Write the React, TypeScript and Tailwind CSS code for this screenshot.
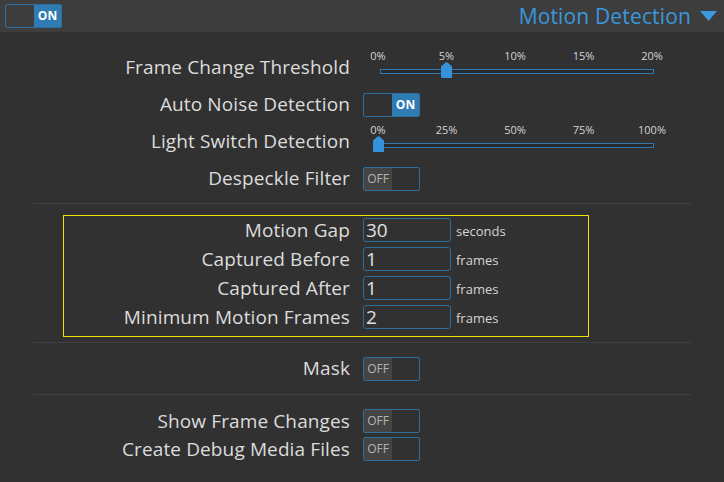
import type { ReactNode } from "react";

const ticksA = ["0%", "5%", "10%", "15%", "20%"];
const ticksB = ["0%", "25%", "50%", "75%", "100%"];

function Toggle({ on }: { on: boolean }) {
  return (
    <div className="flex h-6 w-[57px] overflow-hidden rounded-[2px] border border-[#2e6f9f]">
      {on ? (
        <>
          <div className="w-[28px]" />
          <div className="flex flex-1 items-center justify-center bg-[#2f7bb4] text-[12px] font-bold text-white">ON</div>
        </>
      ) : (
        <>
          <div className="flex w-[28px] items-center justify-center bg-[#444444] text-[12px] text-[#b4b4b4]">OFF</div>
          <div className="flex-1" />
        </>
      )}
    </div>
  );
}

function Slider({ ticks, index }: { ticks: string[]; index: number }) {
  return (
    <div className="relative h-full w-[310px]">
      {ticks.map((t, i) => (
        <span
          key={t}
          className="absolute top-[1px] -translate-x-1/2 text-[11px] leading-none text-[#d4d4d4]"
          style={{ left: 15 + i * 68.5 }}
        >
          {t}
        </span>
      ))}
      <div className="absolute left-[17px] top-[20px] h-[5px] w-[274px] border border-[#2f7ab3] bg-[#2a2a2a]" />
      <svg
        className="absolute top-[13px]"
        style={{ left: 15 + index * 68.5 - 5.5 }}
        width="11"
        height="16"
        viewBox="0 0 11 16"
      >
        <path d="M4.5 0.6 Q5.5 -0.2 6.5 0.6 L11 4.5 V15 Q11 16 10 16 H1 Q0 16 0 15 V4.5 Z" fill="#3593dc" />
      </svg>
    </div>
  );
}

function Row({ label, children }: { label: string; children: ReactNode }) {
  return (
    <div className="flex h-[37px] items-center">
      <div className="w-[350px] shrink-0 text-right text-[19px] leading-none tracking-[0.12px]">{label}</div>
      <div className="ml-[13px] flex h-full items-center">{children}</div>
    </div>
  );
}

function BoxRow({ label, value, unit }: { label: string; value: string; unit: string }) {
  return (
    <div className="flex h-6 items-center">
      <div className="w-[286px] shrink-0 text-right text-[19px] leading-none tracking-[0.12px]">{label}</div>
      <input
        readOnly
        value={value}
        className="ml-[13px] h-6 w-[88px] rounded-[3px] border border-[#2c6d9c] bg-transparent px-[2px] text-[19px] leading-none text-[#e0e0e0] outline-none"
      />
      <span className="ml-[5px] mt-[3px] text-[13px] text-[#d4d4d4]">{unit}</span>
    </div>
  );
}

function SmallRow({ label }: { label: string }) {
  return (
    <div className="flex h-6 items-center">
      <div className="w-[350px] text-right text-[19px] leading-none tracking-[0.12px]">{label}</div>
      <div className="ml-[13px]">
        <Toggle on={false} />
      </div>
    </div>
  );
}

function Divider() {
  return <div className="mx-[33px] h-px bg-[#404040]" />;
}

export default function App() {
  return (
    <div className="h-[482px] w-[724px] overflow-hidden bg-[#313131] font-['Open_Sans',sans-serif] text-[#dcdcdc]">
      <header className="flex h-8 items-center justify-between bg-[#3d3d3d] pl-[5px] pr-[7px]">
        <Toggle on />
        <div className="flex items-center gap-[9px] text-[21px] leading-none tracking-[0.15px] text-[#3a98dc]">
          <span>Motion Detection</span>
          <svg width="17" height="10" viewBox="0 0 17 10">
            <path d="M0 0 H17 L8.5 10 Z" fill="#3a98dc" />
          </svg>
        </div>
      </header>

      <div className="pt-[17px]">
        <Row label="Frame Change Threshold">
          <Slider ticks={ticksA} index={1} />
        </Row>
        <Row label="Auto Noise Detection">
          <Toggle on />
        </Row>
        <Row label="Light Switch Detection">
          <Slider ticks={ticksB} index={0} />
        </Row>
        <Row label="Despeckle Filter">
          <Toggle on={false} />
        </Row>
      </div>

      <div className="mt-[6px]">
        <Divider />
      </div>

      <div className="ml-[63px] mt-[11px] flex w-[526px] flex-col gap-[5px] border border-[#f2e400] pb-[7px] pt-[2px]">
        <BoxRow label="Motion Gap" value="30" unit="seconds" />
        <BoxRow label="Captured Before" value="1" unit="frames" />
        <BoxRow label="Captured After" value="1" unit="frames" />
        <BoxRow label="Minimum Motion Frames" value="2" unit="frames" />
      </div>

      <div className="mt-[5px]">
        <Divider />
      </div>

      <div className="flex h-[51px] items-center">
        <div className="w-[350px] text-right text-[19px] leading-none tracking-[0.12px]">Mask</div>
        <div className="ml-[13px]">
          <Toggle on={false} />
        </div>
      </div>

      <Divider />

      <div className="flex flex-col gap-1 pt-[14px]">
        <SmallRow label="Show Frame Changes" />
        <SmallRow label="Create Debug Media Files" />
      </div>
    </div>
  );
}
